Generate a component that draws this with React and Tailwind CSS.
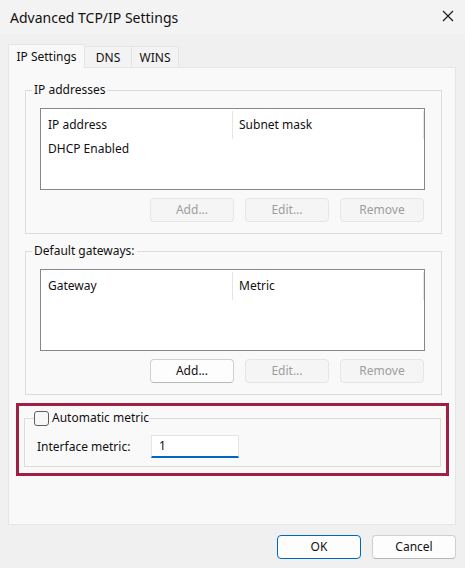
import React from 'react';

const font = { fontFamily: '"Noto Sans", "Open Sans", sans-serif' };

const DlgButton = ({ children, disabled, primary }) => {
  let cls = 'w-[84px] h-[24px] rounded-[4px] border text-[12px] leading-none flex items-center justify-center ';
  if (disabled) cls += 'bg-[#f5f5f5] border-[#e5e5e5] text-[#9d9d9d]';
  else if (primary) cls += 'bg-[#fdfdfd] border-[#0067c0] text-[#111111]';
  else cls += 'bg-[#fdfdfd] border-[#d0d0d0] border-b-[#b8b8b8] text-[#111111]';
  return <div className={cls}>{children}</div>;
};

const ListBox = ({ cols, rows }) => (
  <div className="w-[385px] h-[82px] border border-[#828790] bg-white text-[12px] text-[#111111]">
    <div className="flex h-[30px] items-center">
      <div className="w-[192px] h-[28px] mt-[2px] border-r border-[#e5e5e5] pl-[7px] flex items-center">{cols[0]}</div>
      <div className="w-[191px] h-[28px] mt-[2px] border-r border-[#e5e5e5] pl-[6px] flex items-center">{cols[1]}</div>
    </div>
    {rows.map((r) => (
      <div key={r} className="h-[20px] pl-[7px] flex items-center">{r}</div>
    ))}
  </div>
);

const Group = ({ title, cols, rows, addEnabled }) => (
  <fieldset className="w-[417px] border border-[#dcdcdc] px-[14px] pb-[11px]">
    <legend className="ml-[-8px] px-[2px] text-[12px] leading-[16px] text-[#111111]">{title}</legend>
    <div className="mt-[10px]">
      <ListBox cols={cols} rows={rows} />
    </div>
    <div className="mt-[8px] flex justify-end gap-[11px] pr-[3px]">
      <DlgButton disabled={!addEnabled}>Add...</DlgButton>
      <DlgButton disabled>Edit...</DlgButton>
      <DlgButton disabled>Remove</DlgButton>
    </div>
  </fieldset>
);

export default function App() {
  return (
    <div className="w-[465px] h-[568px] bg-[#f0f0f0] flex flex-col text-[#111111]" style={font}>
      {/* title bar */}
      <div className="h-[34px] bg-[#f3f3f3] flex items-center justify-between pl-[10px] pr-[11px]">
        <span className="text-[14px]">Advanced TCP/IP Settings</span>
        <svg width="12" height="12" viewBox="0 0 12 12" className="mb-[2px]">
          <path d="M1 1 L11 11 M11 1 L1 11" stroke="#1b1b1b" strokeWidth="1.2" />
        </svg>
      </div>

      {/* tabs */}
      <div className="mt-[10px] flex items-end px-[8px] text-[12px]">
        <div className="w-[77px] h-[24px] -mb-px relative bg-[#f9f9f9] border border-b-0 border-[#e5e5e5] flex items-center justify-center">
          IP Settings
        </div>
        <div className="w-[47px] h-[21px] bg-[#f3f3f3] border border-l-0 border-b-0 border-[#e5e5e5] flex items-center justify-center pt-[2px]">
          DNS
        </div>
        <div className="w-[47px] h-[21px] bg-[#f3f3f3] border border-l-0 border-b-0 border-[#e5e5e5] flex items-center justify-center pt-[2px]">
          WINS
        </div>
      </div>

      {/* tab panel */}
      <div className="mx-[8px] w-[448px] h-[458px] border border-[#e5e5e5] bg-[#f9f9f9] pt-[14px]">
        <div className="ml-[16px]">
          <Group
            title="IP addresses"
            cols={['IP address', 'Subnet mask']}
            rows={['DHCP Enabled']}
          />
        </div>
        <div className="ml-[16px] mt-[9px]">
          <Group
            title="Default gateways:"
            cols={['Gateway', 'Metric']}
            rows={[]}
            addEnabled
          />
        </div>

        {/* highlighted metric box */}
        <div className="ml-[7px] mt-[8px] w-[433px] border-[3px] border-[#9f2042] pt-[4px] pb-[6px] pl-[5px]">
          <fieldset className="w-[417px] border border-[#dcdcdc] pl-[12px] pb-[8px]">
            <legend className="ml-[-3px] flex items-center gap-[3px] text-[12px] leading-[16px]">
              <span className="w-[15px] h-[15px] rounded-[3px] border border-[#5f5f5f] bg-[#f7f7f7]" />
              Automatic metric
            </legend>
            <div className="mt-[9px] flex items-center text-[12px]">
              <span className="w-[114px]">Interface metric:</span>
              <div className="w-[88px] h-[23px] bg-white border border-[#e5e5e5] border-b-2 border-b-[#0067c0] pl-[7px] flex items-center">
                1
              </div>
            </div>
          </fieldset>
        </div>
      </div>

      {/* dialog buttons */}
      <div className="mt-[10px] flex justify-end gap-[11px] pr-[9px]">
        <DlgButton primary>OK</DlgButton>
        <DlgButton>Cancel</DlgButton>
      </div>
    </div>
  );
}
